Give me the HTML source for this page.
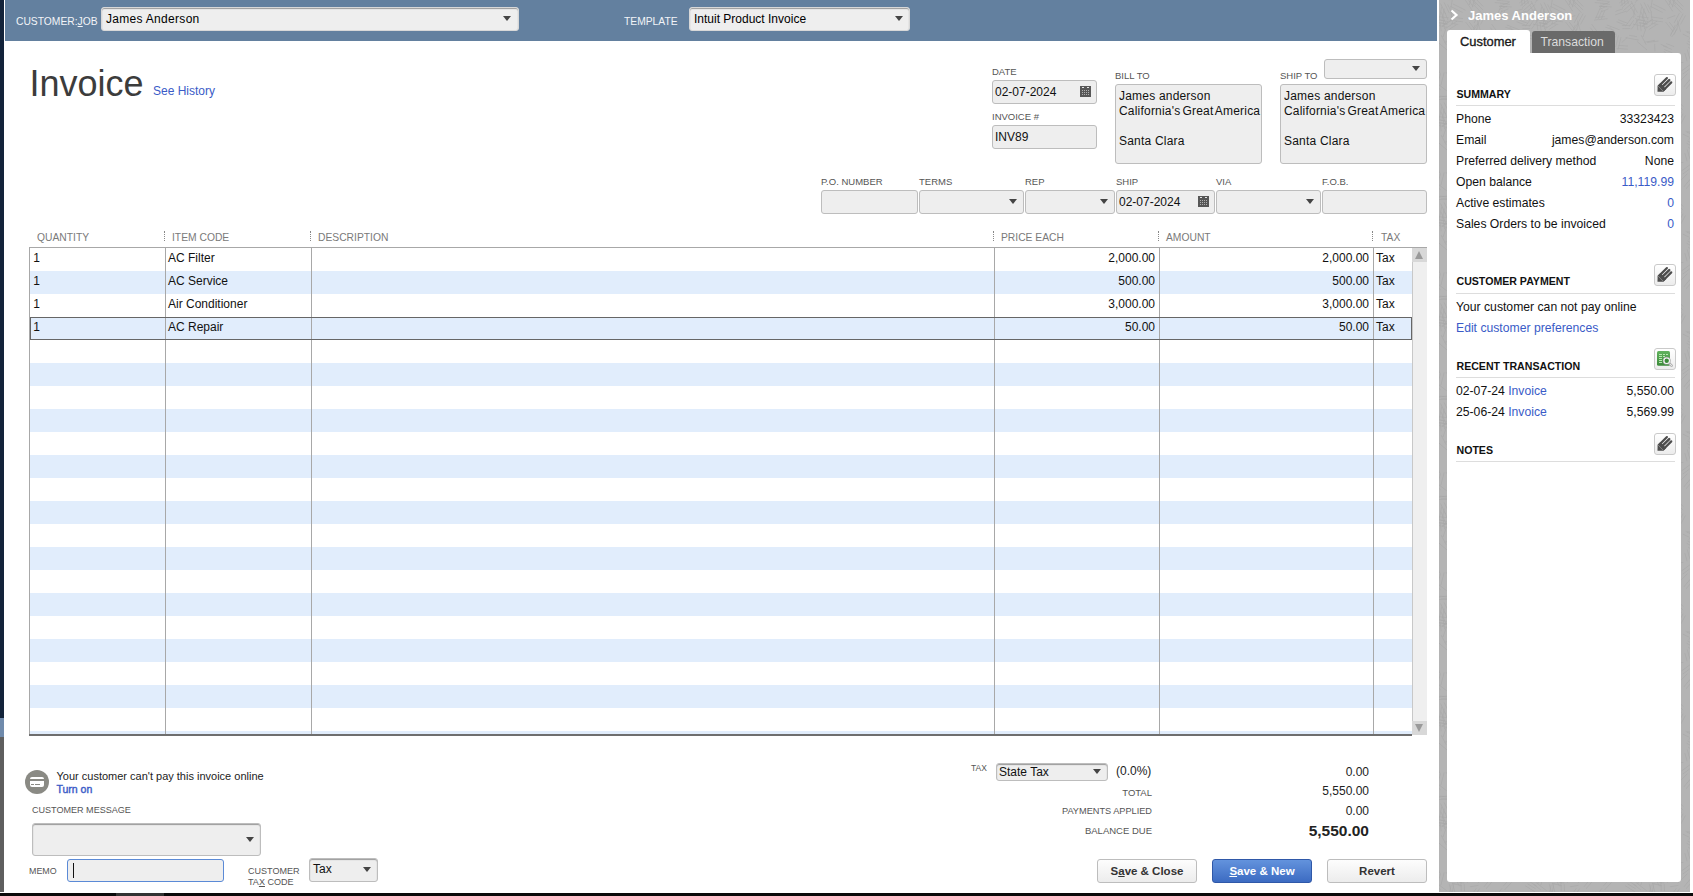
<!DOCTYPE html>
<html><head><meta charset="utf-8"><style>
html,body{margin:0;padding:0;}
body{width:1693px;height:896px;position:relative;overflow:hidden;background:#fff;font-family:"Liberation Sans",sans-serif;}
.t{position:absolute;white-space:nowrap;line-height:1;}
u{text-decoration:underline;text-underline-offset:1px;}
</style></head><body>
<div style="position:absolute;left:0px;top:0px;width:4px;height:718px;background:#13233a"></div>
<div style="position:absolute;left:0px;top:718px;width:4px;height:19px;background:#6f8aab"></div>
<div style="position:absolute;left:0px;top:737px;width:4px;height:155px;background:#5f5f5f"></div>
<div style="position:absolute;left:0px;top:893px;width:1693px;height:3px;background:#0a0a0a"></div>
<div style="position:absolute;left:116px;top:893px;width:48px;height:3px;background:#333"></div>
<div style="position:absolute;left:5px;top:0px;width:1432px;height:41px;background:#63809f"></div>
<div class="t" style="left:16px;top:16.78px;font-size:10.3px;color:#f2f4f8;font-weight:normal;">CUSTOMER:<u>J</u>OB</div>
<div style="position:absolute;left:101px;top:7px;width:418px;height:24px;box-sizing:border-box;background:#eeeeee;border:1px solid #bdbdbd;border-radius:3px;background:#eeeeee;border:1px solid #d8d8d8;box-shadow:inset 0 1px 1px #999;"></div>
<div class="t" style="left:106px;top:12.84px;font-size:12px;color:#000;font-weight:normal;letter-spacing:0.3px">James Anderson</div>
<div style="position:absolute;left:503.0px;top:16.0px;width:0;height:0;border-left:4.5px solid transparent;border-right:4.5px solid transparent;border-top:5px solid #444;"></div>
<div class="t" style="left:624px;top:17.28px;font-size:10.3px;color:#f2f4f8;font-weight:normal;">TEMPLATE</div>
<div style="position:absolute;left:689px;top:7px;width:221px;height:24px;box-sizing:border-box;background:#eeeeee;border:1px solid #bdbdbd;border-radius:3px;background:#eeeeee;border:1px solid #d8d8d8;box-shadow:inset 0 1px 1px #999;"></div>
<div class="t" style="left:694px;top:12.84px;font-size:12px;color:#000;font-weight:normal;">Intuit Product Invoice</div>
<div style="position:absolute;left:895.0px;top:16.0px;width:0;height:0;border-left:4.5px solid transparent;border-right:4.5px solid transparent;border-top:5px solid #444;"></div>
<div class="t" style="left:29.5px;top:65.63px;font-size:36px;color:#3c3c3c;font-weight:normal;">Invoice</div>
<div class="t" style="left:153px;top:85.14px;font-size:12px;color:#3a5bc7;font-weight:normal;">See History</div>
<div class="t" style="left:992px;top:66.96px;font-size:9.5px;color:#555;font-weight:normal;">DATE</div>
<div style="position:absolute;left:992px;top:80px;width:105px;height:24px;box-sizing:border-box;background:#eeeeee;border:1px solid #bdbdbd;border-radius:3px;"></div>
<div class="t" style="left:995px;top:86.34px;font-size:12px;color:#111;font-weight:normal;">02-07-2024</div>
<div class="t" style="left:992px;top:111.96px;font-size:9.5px;color:#555;font-weight:normal;">INVOICE #</div>
<div style="position:absolute;left:992px;top:125px;width:105px;height:24px;box-sizing:border-box;background:#eeeeee;border:1px solid #bdbdbd;border-radius:3px;"></div>
<div class="t" style="left:995px;top:131.34px;font-size:12px;color:#111;font-weight:normal;">INV89</div>
<svg style="position:absolute;left:1080px;top:86px" width="11" height="11" viewBox="0 0 11 11"><rect x="0" y="0" width="11" height="11" fill="#575757"/><g fill="#e6e6e6"><rect x="2" y="1" width="2" height="1"/><rect x="7" y="1" width="2" height="1"/></g><g fill="#b0b0b0"><rect x="2" y="4" width="1" height="1"/><rect x="4" y="4" width="1" height="1"/><rect x="6" y="4" width="1" height="1"/><rect x="8" y="4" width="1" height="1"/><rect x="2" y="6" width="1" height="1"/><rect x="4" y="6" width="1" height="1"/><rect x="6" y="6" width="1" height="1"/><rect x="8" y="6" width="1" height="1"/><rect x="2" y="8" width="1" height="1"/><rect x="4" y="8" width="1" height="1"/><rect x="6" y="8" width="1" height="1"/><rect x="8" y="8" width="1" height="1"/></g></svg>
<div class="t" style="left:1115px;top:70.96px;font-size:9.5px;color:#555;font-weight:normal;">BILL TO</div>
<div style="position:absolute;left:1115px;top:84px;width:147px;height:80px;box-sizing:border-box;background:#eeeeee;border:1px solid #bdbdbd;border-radius:3px;"></div>
<div class="t" style="left:1119px;top:89.84px;width:142px;overflow:hidden;font-size:12px;color:#111;letter-spacing:0.2px;">James anderson</div>
<div class="t" style="left:1119px;top:104.84px;width:142px;overflow:hidden;font-size:12px;color:#111;letter-spacing:0.2px;word-spacing:-1.5px">California's Great America</div>
<div class="t" style="left:1119px;top:134.84px;width:142px;overflow:hidden;font-size:12px;color:#111;letter-spacing:0.2px;">Santa Clara</div>
<div class="t" style="left:1280px;top:70.96px;font-size:9.5px;color:#555;font-weight:normal;">SHIP TO</div>
<div style="position:absolute;left:1324px;top:59px;width:103px;height:20px;box-sizing:border-box;background:#eeeeee;border:1px solid #bdbdbd;border-radius:3px;"></div>
<div style="position:absolute;left:1412.0px;top:66.0px;width:0;height:0;border-left:4.5px solid transparent;border-right:4.5px solid transparent;border-top:5px solid #444;"></div>
<div style="position:absolute;left:1280px;top:84px;width:147px;height:80px;box-sizing:border-box;background:#eeeeee;border:1px solid #bdbdbd;border-radius:3px;"></div>
<div class="t" style="left:1284px;top:89.84px;width:142px;overflow:hidden;font-size:12px;color:#111;letter-spacing:0.2px;">James anderson</div>
<div class="t" style="left:1284px;top:104.84px;width:142px;overflow:hidden;font-size:12px;color:#111;letter-spacing:0.2px;word-spacing:-1.5px">California's Great America</div>
<div class="t" style="left:1284px;top:134.84px;width:142px;overflow:hidden;font-size:12px;color:#111;letter-spacing:0.2px;">Santa Clara</div>
<div class="t" style="left:821px;top:176.96px;font-size:9.5px;color:#555;font-weight:normal;">P.O. NUMBER</div>
<div style="position:absolute;left:821px;top:190px;width:97px;height:24px;box-sizing:border-box;background:#eeeeee;border:1px solid #bdbdbd;border-radius:3px;"></div>
<div class="t" style="left:919px;top:176.96px;font-size:9.5px;color:#555;font-weight:normal;">TERMS</div>
<div style="position:absolute;left:919px;top:190px;width:105px;height:24px;box-sizing:border-box;background:#eeeeee;border:1px solid #bdbdbd;border-radius:3px;"></div>
<div style="position:absolute;left:1009.0px;top:199.0px;width:0;height:0;border-left:4.5px solid transparent;border-right:4.5px solid transparent;border-top:5px solid #444;"></div>
<div class="t" style="left:1025px;top:176.96px;font-size:9.5px;color:#555;font-weight:normal;">REP</div>
<div style="position:absolute;left:1025px;top:190px;width:90px;height:24px;box-sizing:border-box;background:#eeeeee;border:1px solid #bdbdbd;border-radius:3px;"></div>
<div style="position:absolute;left:1100.0px;top:199.0px;width:0;height:0;border-left:4.5px solid transparent;border-right:4.5px solid transparent;border-top:5px solid #444;"></div>
<div class="t" style="left:1116px;top:176.96px;font-size:9.5px;color:#555;font-weight:normal;">SHIP</div>
<div style="position:absolute;left:1116px;top:190px;width:99px;height:24px;box-sizing:border-box;background:#eeeeee;border:1px solid #bdbdbd;border-radius:3px;"></div>
<div class="t" style="left:1119px;top:196.34px;font-size:12px;color:#111;font-weight:normal;">02-07-2024</div>
<svg style="position:absolute;left:1198px;top:196px" width="11" height="11" viewBox="0 0 11 11"><rect x="0" y="0" width="11" height="11" fill="#575757"/><g fill="#e6e6e6"><rect x="2" y="1" width="2" height="1"/><rect x="7" y="1" width="2" height="1"/></g><g fill="#b0b0b0"><rect x="2" y="4" width="1" height="1"/><rect x="4" y="4" width="1" height="1"/><rect x="6" y="4" width="1" height="1"/><rect x="8" y="4" width="1" height="1"/><rect x="2" y="6" width="1" height="1"/><rect x="4" y="6" width="1" height="1"/><rect x="6" y="6" width="1" height="1"/><rect x="8" y="6" width="1" height="1"/><rect x="2" y="8" width="1" height="1"/><rect x="4" y="8" width="1" height="1"/><rect x="6" y="8" width="1" height="1"/><rect x="8" y="8" width="1" height="1"/></g></svg>
<div class="t" style="left:1216px;top:176.96px;font-size:9.5px;color:#555;font-weight:normal;">VIA</div>
<div style="position:absolute;left:1216px;top:190px;width:105px;height:24px;box-sizing:border-box;background:#eeeeee;border:1px solid #bdbdbd;border-radius:3px;"></div>
<div style="position:absolute;left:1306.0px;top:199.0px;width:0;height:0;border-left:4.5px solid transparent;border-right:4.5px solid transparent;border-top:5px solid #444;"></div>
<div class="t" style="left:1322px;top:176.96px;font-size:9.5px;color:#555;font-weight:normal;">F.O.B.</div>
<div style="position:absolute;left:1322px;top:190px;width:105px;height:24px;box-sizing:border-box;background:#eeeeee;border:1px solid #bdbdbd;border-radius:3px;"></div>
<div class="t" style="left:37px;top:233.28px;font-size:10.3px;color:#7a7a7a;font-weight:normal;">QUANTITY</div>
<div class="t" style="left:172px;top:233.28px;font-size:10.3px;color:#7a7a7a;font-weight:normal;">ITEM CODE</div>
<div class="t" style="left:318px;top:233.28px;font-size:10.3px;color:#7a7a7a;font-weight:normal;">DESCRIPTION</div>
<div class="t" style="left:1001px;top:233.28px;font-size:10.3px;color:#7a7a7a;font-weight:normal;">PRICE EACH</div>
<div class="t" style="left:1166px;top:233.28px;font-size:10.3px;color:#7a7a7a;font-weight:normal;">AMOUNT</div>
<div class="t" style="left:1381px;top:233.28px;font-size:10.3px;color:#7a7a7a;font-weight:normal;">TAX</div>
<div style="position:absolute;left:164px;top:231px;width:0;height:10px;border-left:1px dotted #888"></div>
<div style="position:absolute;left:310px;top:231px;width:0;height:10px;border-left:1px dotted #888"></div>
<div style="position:absolute;left:993px;top:231px;width:0;height:10px;border-left:1px dotted #888"></div>
<div style="position:absolute;left:1158px;top:231px;width:0;height:10px;border-left:1px dotted #888"></div>
<div style="position:absolute;left:1372px;top:231px;width:0;height:10px;border-left:1px dotted #888"></div>
<div style="position:absolute;left:29px;top:247px;width:1398px;height:1px;background:#a8a8a8"></div>
<div style="position:absolute;left:29px;top:247px;width:1px;height:489px;background:#a8a8a8"></div>
<div style="position:absolute;left:30px;top:271px;width:1382px;height:23px;background:#e1edfc"></div>
<div style="position:absolute;left:30px;top:317px;width:1382px;height:23px;background:#e1edfc"></div>
<div style="position:absolute;left:30px;top:363px;width:1382px;height:23px;background:#e1edfc"></div>
<div style="position:absolute;left:30px;top:409px;width:1382px;height:23px;background:#e1edfc"></div>
<div style="position:absolute;left:30px;top:455px;width:1382px;height:23px;background:#e1edfc"></div>
<div style="position:absolute;left:30px;top:501px;width:1382px;height:23px;background:#e1edfc"></div>
<div style="position:absolute;left:30px;top:547px;width:1382px;height:23px;background:#e1edfc"></div>
<div style="position:absolute;left:30px;top:593px;width:1382px;height:23px;background:#e1edfc"></div>
<div style="position:absolute;left:30px;top:639px;width:1382px;height:23px;background:#e1edfc"></div>
<div style="position:absolute;left:30px;top:685px;width:1382px;height:23px;background:#e1edfc"></div>
<div style="position:absolute;left:30px;top:731px;width:1382px;height:3px;background:#e1edfc"></div>
<div style="position:absolute;left:165px;top:248px;width:1px;height:486px;background:#a8a8a8"></div>
<div style="position:absolute;left:311px;top:248px;width:1px;height:486px;background:#a8a8a8"></div>
<div style="position:absolute;left:994px;top:248px;width:1px;height:486px;background:#a8a8a8"></div>
<div style="position:absolute;left:1159px;top:248px;width:1px;height:486px;background:#a8a8a8"></div>
<div style="position:absolute;left:1373px;top:248px;width:1px;height:486px;background:#a8a8a8"></div>
<div style="position:absolute;left:29px;top:734px;width:1383px;height:2px;background:#6e6e6e"></div>
<div style="position:absolute;left:1412px;top:248px;width:15px;height:487px;background:#efefef;border-left:1px solid #c8c8c8;box-sizing:border-box"></div>
<div style="position:absolute;left:1412px;top:248px;width:15px;height:14px;background:#d8d8d8"></div>
<div style="position:absolute;left:1412px;top:721px;width:15px;height:14px;background:#d8d8d8"></div>
<div style="position:absolute;left:1415px;top:251px;width:0;height:0;border-left:4.5px solid transparent;border-right:4.5px solid transparent;border-bottom:8px solid #9a9a9a"></div>
<div style="position:absolute;left:1415px;top:724px;width:0;height:0;border-left:4.5px solid transparent;border-right:4.5px solid transparent;border-top:8px solid #9a9a9a"></div>
<div style="position:absolute;left:30px;top:317px;width:1382px;height:23px;box-sizing:border-box;border:1px solid #666"></div>
<div class="t" style="left:33.3px;top:251.84px;font-size:12px;color:#111;font-weight:normal;">1</div>
<div class="t" style="left:168px;top:251.84px;font-size:12px;color:#111;font-weight:normal;">AC Filter</div>
<div class="t" style="right:538px;top:251.84px;font-size:12px;color:#111;font-weight:normal;">2,000.00</div>
<div class="t" style="right:324px;top:251.84px;font-size:12px;color:#111;font-weight:normal;">2,000.00</div>
<div class="t" style="left:1376px;top:251.84px;font-size:12px;color:#111;font-weight:normal;">Tax</div>
<div class="t" style="left:33.3px;top:274.84px;font-size:12px;color:#111;font-weight:normal;">1</div>
<div class="t" style="left:168px;top:274.84px;font-size:12px;color:#111;font-weight:normal;">AC Service</div>
<div class="t" style="right:538px;top:274.84px;font-size:12px;color:#111;font-weight:normal;">500.00</div>
<div class="t" style="right:324px;top:274.84px;font-size:12px;color:#111;font-weight:normal;">500.00</div>
<div class="t" style="left:1376px;top:274.84px;font-size:12px;color:#111;font-weight:normal;">Tax</div>
<div class="t" style="left:33.3px;top:297.84px;font-size:12px;color:#111;font-weight:normal;">1</div>
<div class="t" style="left:168px;top:297.84px;font-size:12px;color:#111;font-weight:normal;">Air Conditioner</div>
<div class="t" style="right:538px;top:297.84px;font-size:12px;color:#111;font-weight:normal;">3,000.00</div>
<div class="t" style="right:324px;top:297.84px;font-size:12px;color:#111;font-weight:normal;">3,000.00</div>
<div class="t" style="left:1376px;top:297.84px;font-size:12px;color:#111;font-weight:normal;">Tax</div>
<div class="t" style="left:33.3px;top:320.84px;font-size:12px;color:#111;font-weight:normal;">1</div>
<div class="t" style="left:168px;top:320.84px;font-size:12px;color:#111;font-weight:normal;">AC Repair</div>
<div class="t" style="right:538px;top:320.84px;font-size:12px;color:#111;font-weight:normal;">50.00</div>
<div class="t" style="right:324px;top:320.84px;font-size:12px;color:#111;font-weight:normal;">50.00</div>
<div class="t" style="left:1376px;top:320.84px;font-size:12px;color:#111;font-weight:normal;">Tax</div>
<div style="position:absolute;left:25px;top:770px;width:24px;height:24px;border-radius:50%;background:#8a8a84"></div>
<div style="position:absolute;left:30px;top:777px;width:14px;height:10px;background:#fff;border-radius:2px"></div>
<div style="position:absolute;left:30px;top:779px;width:14px;height:2px;background:#8a8a84"></div>
<div style="position:absolute;left:31px;top:784px;width:3px;height:1px;background:#8a8a84"></div>
<div style="position:absolute;left:35px;top:784px;width:5px;height:1px;background:#8a8a84"></div>
<div class="t" style="left:56.5px;top:770.69px;font-size:11px;color:#222;font-weight:normal;">Your customer can't pay this invoice online</div>
<div class="t" style="left:56.5px;top:784.11px;font-size:10.5px;color:#3a5bc7;font-weight:normal;-webkit-text-stroke:0.4px #3a5bc7">Turn on</div>
<div class="t" style="left:32px;top:806.14px;font-size:9.05px;color:#555;font-weight:normal;">CUSTOMER MESSAGE</div>
<div style="position:absolute;left:32px;top:823px;width:229px;height:33px;box-sizing:border-box;background:#eeeeee;border:1px solid #bdbdbd;border-radius:3px;box-shadow:inset 0 1px 1px #999;"></div>
<div style="position:absolute;left:246.0px;top:837.0px;width:0;height:0;border-left:4.5px solid transparent;border-right:4.5px solid transparent;border-top:5px solid #444;"></div>
<div class="t" style="left:29px;top:866.67px;font-size:8.9px;color:#555;font-weight:normal;">MEMO</div>
<div style="position:absolute;left:67px;top:859px;width:157px;height:23px;box-sizing:border-box;background:#eeeeee;border:1px solid #bdbdbd;border-radius:3px;border:1.5px solid #5b8ad6;"></div>
<div style="position:absolute;left:73px;top:863px;width:1px;height:15px;background:#111"></div>
<div class="t" style="left:248px;top:866.54px;font-size:9.05px;color:#555;font-weight:normal;">CUSTOMER</div>
<div class="t" style="left:248px;top:878.14px;font-size:9.05px;color:#555;font-weight:normal;">TA<u>X</u> CODE</div>
<div style="position:absolute;left:309px;top:858px;width:69px;height:24px;box-sizing:border-box;background:#eeeeee;border:1px solid #bdbdbd;border-radius:3px;box-shadow:inset 0 1px 1px #999;"></div>
<div class="t" style="left:313px;top:863.34px;font-size:12px;color:#111;font-weight:normal;">Tax</div>
<div style="position:absolute;left:363.0px;top:867.0px;width:0;height:0;border-left:4.5px solid transparent;border-right:4.5px solid transparent;border-top:5px solid #444;"></div>
<div class="t" style="left:971px;top:764.30px;font-size:8.5px;color:#555;font-weight:normal;">TAX</div>
<div style="position:absolute;left:996px;top:763px;width:112px;height:18px;box-sizing:border-box;background:#eeeeee;border:1px solid #bdbdbd;border-radius:3px;box-shadow:inset 0 1px 1px #999;"></div>
<div class="t" style="left:999px;top:766.14px;font-size:12px;color:#111;font-weight:normal;">State Tax</div>
<div style="position:absolute;left:1093.0px;top:769.0px;width:0;height:0;border-left:4.5px solid transparent;border-right:4.5px solid transparent;border-top:5px solid #444;"></div>
<div class="t" style="left:1116px;top:764.94px;font-size:12px;color:#222;font-weight:normal;">(0.0%)</div>
<div class="t" style="right:324px;top:766.14px;font-size:12px;color:#222;font-weight:normal;">0.00</div>
<div class="t" style="right:541px;top:787.96px;font-size:9.5px;color:#555;font-weight:normal;">TOTAL</div>
<div class="t" style="right:324px;top:785.14px;font-size:12px;color:#222;font-weight:normal;">5,550.00</div>
<div class="t" style="right:541px;top:806.71px;font-size:9.2px;color:#555;font-weight:normal;">PAYMENTS APPLIED</div>
<div class="t" style="right:324px;top:805.14px;font-size:12px;color:#222;font-weight:normal;">0.00</div>
<div class="t" style="right:541px;top:826.46px;font-size:9.5px;color:#555;font-weight:normal;">BALANCE DUE</div>
<div class="t" style="right:324px;top:823.38px;font-size:15.5px;color:#222;font-weight:bold;">5,550.00</div>
<div style="position:absolute;left:1097px;top:859px;width:100px;height:24px;box-sizing:border-box;border-radius:3px;background:linear-gradient(#fdfdfd,#ececec);border:1px solid #bdbdbd;color:#333;font-weight:bold;font-size:11.5px;text-align:center;line-height:22px">S<u>a</u>ve &amp; Close</div>
<div style="position:absolute;left:1212px;top:859px;width:100px;height:24px;box-sizing:border-box;border-radius:3px;background:linear-gradient(#6393dd,#3c6bc2);border:1px solid #2f58a8;color:#fff;font-weight:bold;font-size:11.5px;text-align:center;line-height:22px"><u>S</u>ave &amp; New</div>
<div style="position:absolute;left:1327px;top:859px;width:100px;height:24px;box-sizing:border-box;border-radius:3px;background:linear-gradient(#fdfdfd,#ececec);border:1px solid #bdbdbd;color:#333;font-weight:bold;font-size:11.5px;text-align:center;line-height:22px">Revert</div>
<div style="position:absolute;left:1439px;top:0px;width:251px;height:892px;background:#b4b4b4"></div>
<svg style="position:absolute;left:1439px;top:0" width="251" height="892"><defs><pattern id="tx" width="100" height="100" patternUnits="userSpaceOnUse"><path d="M66.5 70.7L56.2 78.5M5.4 11.4L9.1 20.3M2.0 11.8L6.7 23.0M88.5 37.2L82.7 42.6M-3.1 82.4L7.7 90.8M96.9 82.4L107.7 90.8M-5.4 84.4L1.9 90.0M94.6 84.4L101.9 90.0M68.7 18.7L55.0 20.1M65.8 16.6L56.3 17.5M7.6 26.4L4.0 37.0M38.6 28.6L32.6 37.1M39.2 23.5L31.2 34.8M88.9 -0.1L81.3 5.9M88.9 99.9L81.3 105.9M89.6 -4.3L80.2 3.1M89.6 95.7L80.2 103.1M17.6 24.7L9.7 29.7M18.2 21.0L7.7 27.7M13.9 19.5L3.3 26.2M92.0 1.0L98.4 12.7M92.0 101.0L98.4 112.7M91.2 5.7L96.3 15.2M13.9 3.9L26.4 10.2M11.2 6.2L23.6 12.5M32.0 58.2L22.1 64.2M27.9 56.6L18.1 62.5M25.8 54.2L18.6 58.6M13.3 83.0L16.0 92.7M10.1 83.7L12.5 92.5M87.6 -7.8L89.3 3.9M87.6 92.2L89.3 103.9M84.4 -5.9L85.9 4.3M84.4 94.1L85.9 104.3M81.5 -7.0L83.3 5.6M81.5 93.0L83.3 105.6M90.2 81.3L97.7 86.0M88.6 83.8L96.7 88.9M86.2 85.7L96.2 92.0M35.0 64.7L40.6 71.5M32.9 66.1L41.6 76.6M29.2 66.5L37.5 76.5M30.2 22.0L36.0 29.5M26.7 22.1L34.6 32.2M91.1 70.0L80.5 70.8M93.2 66.5L80.4 67.5M73.8 68.4L66.3 76.9M72.8 65.8L63.8 76.0M91.4 28.6L83.3 28.7M91.5 25.4L82.9 25.5M-2.0 41.4L8.0 50.0M98.0 41.4L108.0 50.0M48.3 49.5L50.8 58.8M45.9 53.1L48.2 61.4M38.3 20.4L41.6 31.8M52.6 24.1L60.8 35.1M51.3 27.6L56.1 34.0M48.6 41.0L58.3 46.1M47.5 43.2L57.5 48.6M49.2 47.3L55.4 50.6M65.9 10.5L61.9 19.7M63.2 9.7L59.1 19.2M61.7 6.7L56.6 18.6M70.6 27.1L77.1 33.7M27.2 43.5L35.3 46.7M23.9 45.8L32.9 49.4M25.2 49.5L33.3 52.8M52.9 81.9L47.1 88.8M52.1 78.2L44.7 87.0M10.7 72.2L17.3 81.4M7.0 72.2L12.5 79.8M14.0 -4.3L11.8 8.7M14.0 95.7L11.8 108.7M82.0 37.2L78.9 49.8M79.4 35.5L76.7 46.9M75.7 37.8L73.3 47.8M5.2 72.4L1.8 85.3M1.5 73.3L-1.2 83.8M101.5 73.3L98.8 83.8M98.7 72.0L96.6 79.8M12.7 19.7L2.9 26.0M0.7 -3.5L-3.9 2.8M0.7 96.5L-3.9 102.8M100.7 -3.5L96.1 2.8M100.7 96.5L96.1 102.8M87.4 11.1L76.1 14.9M84.2 8.7L76.3 11.4M22.7 52.9L18.4 60.8M35.3 62.3L44.5 62.6M90.1 35.3L98.0 36.7M-13.5 37.7L-0.3 40.0M86.5 37.7L99.7 40.0M24.6 50.9L32.1 58.5M22.7 53.8L29.4 60.7M67.4 64.1L74.7 66.1M25.1 83.6L25.6 91.3M21.7 81.2L22.3 90.9M48.6 73.6L38.9 83.3M12.7 57.2L16.6 65.3M9.5 56.7L15.1 67.9M39.4 25.0L35.1 34.8M36.3 24.9L31.4 36.1M-1.8 16.5L9.8 17.9M98.2 16.5L109.8 17.9M-2.9 19.8L6.1 20.9M97.1 19.8L106.1 20.9M-0.4 22.8L8.8 23.9M99.6 22.8L108.8 23.9M69.5 8.8L62.1 12.0M68.2 6.1L60.7 9.3M70.6 2.0L61.1 6.1M41.1 -7.7L35.4 0.8M41.1 92.3L35.4 100.8M40.7 88.5L34.2 98.2M37.3 88.2L30.6 98.3M-4.0 18.5L9.0 21.7M96.0 18.5L109.0 21.7M0.2 22.4L8.2 24.4M100.2 22.4L108.2 24.4M-6.1 24.0L7.5 27.4M93.9 24.0L107.5 27.4M12.2 16.9L24.1 18.6M13.8 20.5L23.9 21.9M12.2 23.4L19.4 24.4M63.0 88.4L54.6 98.7M56.7 91.7L52.1 97.4M37.2 -0.7L44.3 6.6M37.2 99.3L44.3 106.6M34.6 0.4L44.1 10.2M34.6 100.4L44.1 110.2M34.5 4.6L42.5 12.8M-11.3 76.7L-0.5 79.7M88.7 76.7L99.5 79.7M88.9 79.6L95.8 81.5M59.8 31.7L54.6 44.1M79.1 19.7L88.8 23.4M77.5 21.7L86.7 25.2M50.8 68.9L43.6 74.2M52.2 63.9L42.6 70.9M96.3 4.3L87.1 12.4M93.0 3.0L84.3 10.7M90.6 1.0L83.1 7.7M90.6 101.0L83.1 107.7M98.9 70.2L94.3 76.5M96.3 69.4L90.8 76.9M47.7 31.7L54.9 32.5M39.4 85.4L30.9 86.8M36.4 -4.2L33.2 7.4M36.4 95.8L33.2 107.4M32.4 -2.9L30.3 5.0M32.4 97.1L30.3 105.0M89.4 75.9L98.8 79.6M89.0 78.8L96.6 81.8M15.7 43.8L15.9 51.5M0.6 96.1L10.9 97.2M100.6 96.1L110.9 97.2M2.1 -1.2L10.5 -0.3M2.1 98.8L10.5 99.7M61.4 32.3L54.6 39.1M57.8 31.5L49.6 39.7M46.7 31.5L56.1 36.1M43.8 34.1L50.7 37.4M18.3 71.6L25.2 82.7M17.7 75.4L22.8 83.6M14.9 76.8L20.7 86.3M30.8 -3.9L36.7 4.8M30.8 96.1L36.7 104.8M28.5 -1.6L34.2 6.8M28.5 98.4L34.2 106.8M26.4 0.2L33.9 11.5M26.4 100.2L33.9 111.5M19.6 41.0L8.0 42.5M8.6 4.3L12.6 12.5M5.0 2.3L10.3 13.1M1.5 3.5L6.6 14.0M72.6 82.4L65.5 90.0M70.5 79.4L64.1 86.3M-4.1 60.8L0.9 73.2M95.9 60.8L100.9 73.2M93.8 63.9L96.7 71.1M77.3 36.6L68.8 39.7M72.8 34.9L65.8 37.6M46.4 15.5L41.7 24.3M44.2 13.5L37.9 25.3M40.4 13.1L35.1 23.0M5.3 8.5L3.4 18.4M2.6 6.8L0.2 19.1M102.6 6.8L100.2 19.1M95.3 8.6L94.7 17.8M-0.4 19.1L-7.9 29.6M99.6 19.1L92.1 29.6M94.7 20.2L90.2 26.6M93.6 16.3L86.5 26.3M29.2 75.2L37.2 80.4M36.3 15.5L28.1 18.5M8.4 -1.4L-3.3 0.0M8.4 98.6L-3.3 100.0M108.4 -1.4L96.7 0.0M108.4 98.6L96.7 100.0M8.2 96.0L-5.3 97.6M108.2 96.0L94.7 97.6M67.7 24.9L80.8 29.9M66.3 27.1L75.1 30.4M67.1 31.1L77.9 35.2M16.0 40.3L5.5 42.2M17.7 63.7L31.1 66.8M18.0 67.1L26.0 69.0M21.7 44.3L28.2 47.0M3.8 16.3L5.6 29.3M1.1 22.9L2.2 31.2M97.6 19.9L98.9 30.4M79.4 45.4L89.1 46.1M77.6 48.4L88.8 49.2M57.7 0.4L70.4 1.4M57.7 100.4L70.4 101.4M55.7 2.6L69.0 3.6M60.1 6.2L68.2 6.8M16.2 81.1L24.5 83.1M13.1 83.3L23.1 85.8M12.0 11.4L13.5 23.1M20.8 63.0L11.2 72.8M19.0 60.2L12.9 66.4M15.3 60.5L10.3 65.7M25.7 69.3L28.9 76.8M23.9 71.8L28.5 82.8M64.4 30.0L68.7 39.9M62.6 32.9L68.1 45.5M60.7 36.4L63.5 42.9M61.2 3.8L71.1 4.3M60.2 6.4L72.7 7.0M2.1 35.1L7.2 44.8M15.1 83.3L12.6 95.0M12.2 84.8L9.3 98.4" stroke="#a6a6a6" stroke-width="1" stroke-opacity="0.6" fill="none"/></pattern></defs><rect width="251" height="892" fill="url(#tx)"/></svg>
<svg style="position:absolute;left:1450px;top:9px" width="9" height="12" viewBox="0 0 9 12"><path d="M1.5 1.5 L6.5 6 L1.5 10.5" stroke="#fff" stroke-width="2.2" fill="none"/></svg>
<div class="t" style="left:1468px;top:9.20px;font-size:13px;color:#fff;font-weight:bold;">James Anderson</div>
<div style="position:absolute;left:1447px;top:30px;width:83px;height:24px;background:#fff;border-radius:3px 3px 0 0"></div>
<div class="t" style="left:1460px;top:35.88px;font-size:12.9px;color:#1a1a1a;font-weight:normal;-webkit-text-stroke:0.35px #1a1a1a">Customer</div>
<div style="position:absolute;left:1532px;top:31px;width:83px;height:22px;background:#6a6a6a;border-radius:3px 3px 0 0"></div>
<div class="t" style="left:1540.5px;top:35.67px;font-size:12.2px;color:#dcdcdc;font-weight:normal;">Transaction</div>
<div style="position:absolute;left:1447px;top:53px;width:234px;height:829px;background:#fff;border-radius:0 3px 3px 3px"></div>
<div style="position:absolute;left:1654px;top:74px;width:22px;height:22px;box-sizing:border-box;border:1px solid #cacaca;border-radius:3px;background:linear-gradient(#ffffff,#ececec)"></div>
<svg style="position:absolute;left:1650px;top:70px" width="30" height="30" viewBox="0 0 30 30"><g transform="translate(7.5,21.8) rotate(-45)" fill="#4d4d4d"><path d="M0 0 L4.3 -4.15 L4.3 4.15 Z"/><rect x="4.2" y="-4.15" width="4" height="8.3"/><rect x="4.2" y="-4.15" width="13.3" height="2.2" rx="1.1"/><rect x="4.2" y="-1.25" width="13.6" height="2.5" rx="1.2"/><rect x="4.2" y="1.95" width="13.3" height="2.2" rx="1.1"/><path d="M4.5 -4 L4.5 4" stroke="#909090" stroke-width="0.7"/></g></svg>
<div class="t" style="left:1456.5px;top:88.73px;font-size:10.6px;color:#111;font-weight:bold;">SUMMARY</div>
<div style="position:absolute;left:1456px;top:105px;width:219px;height:1px;background:#dddddd"></div>
<div class="t" style="left:1456px;top:113.17px;font-size:12.2px;color:#111;font-weight:normal;">Phone</div>
<div class="t" style="right:19px;top:113.17px;font-size:12.2px;color:#111;font-weight:normal;">33323423</div>
<div class="t" style="left:1456px;top:134.17px;font-size:12.2px;color:#111;font-weight:normal;">Email</div>
<div class="t" style="right:19px;top:134.17px;font-size:12.2px;color:#111;font-weight:normal;">james@anderson.com</div>
<div class="t" style="left:1456px;top:155.17px;font-size:12.2px;color:#111;font-weight:normal;">Preferred delivery method</div>
<div class="t" style="right:19px;top:155.17px;font-size:12.2px;color:#111;font-weight:normal;">None</div>
<div class="t" style="left:1456px;top:176.17px;font-size:12.2px;color:#111;font-weight:normal;">Open balance</div>
<div class="t" style="right:19px;top:176.17px;font-size:12.2px;color:#3a5bc7;font-weight:normal;">11,119.99</div>
<div class="t" style="left:1456px;top:197.17px;font-size:12.2px;color:#111;font-weight:normal;">Active estimates</div>
<div class="t" style="right:19px;top:197.17px;font-size:12.2px;color:#3a5bc7;font-weight:normal;">0</div>
<div class="t" style="left:1456px;top:218.17px;font-size:12.2px;color:#111;font-weight:normal;">Sales Orders to be invoiced</div>
<div class="t" style="right:19px;top:218.17px;font-size:12.2px;color:#3a5bc7;font-weight:normal;">0</div>
<div style="position:absolute;left:1654px;top:264px;width:22px;height:22px;box-sizing:border-box;border:1px solid #cacaca;border-radius:3px;background:linear-gradient(#ffffff,#ececec)"></div>
<svg style="position:absolute;left:1650px;top:260px" width="30" height="30" viewBox="0 0 30 30"><g transform="translate(7.5,21.8) rotate(-45)" fill="#4d4d4d"><path d="M0 0 L4.3 -4.15 L4.3 4.15 Z"/><rect x="4.2" y="-4.15" width="4" height="8.3"/><rect x="4.2" y="-4.15" width="13.3" height="2.2" rx="1.1"/><rect x="4.2" y="-1.25" width="13.6" height="2.5" rx="1.2"/><rect x="4.2" y="1.95" width="13.3" height="2.2" rx="1.1"/><path d="M4.5 -4 L4.5 4" stroke="#909090" stroke-width="0.7"/></g></svg>
<div class="t" style="left:1456.5px;top:275.53px;font-size:10.6px;color:#111;font-weight:bold;">CUSTOMER PAYMENT</div>
<div style="position:absolute;left:1456px;top:293px;width:219px;height:1px;background:#dddddd"></div>
<div class="t" style="left:1456px;top:300.97px;font-size:12.2px;color:#111;font-weight:normal;">Your customer can not pay online</div>
<div class="t" style="left:1456px;top:322.47px;font-size:12.2px;color:#3a5bc7;font-weight:normal;">Edit customer preferences</div>
<div style="position:absolute;left:1654px;top:348px;width:22px;height:22px;box-sizing:border-box;border:1px solid #cacaca;border-radius:3px;background:linear-gradient(#ffffff,#ececec)"></div>
<svg style="position:absolute;left:1650px;top:344px" width="30" height="30" viewBox="0 0 30 30"><defs><linearGradient id="gg" x1="0" y1="0" x2="0" y2="1"><stop offset="0" stop-color="#62b35e"/><stop offset="1" stop-color="#3b8a3a"/></linearGradient></defs><rect x="7" y="6.9" width="13" height="14.9" rx="1.5" fill="url(#gg)"/><g fill="#b8e8b0"><rect x="9" y="10" width="3" height="1"/><rect x="13" y="10" width="2" height="1"/><rect x="16" y="10" width="2" height="1"/><rect x="9" y="12" width="3" height="1"/><rect x="13" y="12" width="2" height="1"/><rect x="9" y="14" width="3" height="1"/><rect x="9" y="16" width="3" height="1"/><rect x="9" y="18" width="3" height="1"/></g><path d="M18.8 18.8 L21.6 21.6" stroke="#9a9a9a" stroke-width="2.4" stroke-linecap="round"/><path d="M18.8 18.8 L21.6 21.6" stroke="#e8e8e8" stroke-width="1.2" stroke-linecap="round"/><circle cx="16.7" cy="16.7" r="3.9" fill="#9c9c9c"/><circle cx="16.7" cy="16.7" r="3.3" fill="#fafafa"/><circle cx="16.7" cy="16.7" r="2.2" fill="#3a8a38"/></svg>
<div class="t" style="left:1456.5px;top:360.53px;font-size:10.6px;color:#111;font-weight:bold;">RECENT TRANSACTION</div>
<div style="position:absolute;left:1456px;top:377px;width:219px;height:1px;background:#dddddd"></div>
<div class="t" style="left:1456px;top:385.47px;font-size:12.2px;color:#111">02-07-24 <span style="color:#3a5bc7">Invoice</span></div>
<div class="t" style="right:19px;top:385.47px;font-size:12.2px;color:#111;font-weight:normal;">5,550.00</div>
<div class="t" style="left:1456px;top:406.47px;font-size:12.2px;color:#111">25-06-24 <span style="color:#3a5bc7">Invoice</span></div>
<div class="t" style="right:19px;top:406.47px;font-size:12.2px;color:#111;font-weight:normal;">5,569.99</div>
<div style="position:absolute;left:1654px;top:433px;width:22px;height:22px;box-sizing:border-box;border:1px solid #cacaca;border-radius:3px;background:linear-gradient(#ffffff,#ececec)"></div>
<svg style="position:absolute;left:1650px;top:429px" width="30" height="30" viewBox="0 0 30 30"><g transform="translate(7.5,21.8) rotate(-45)" fill="#4d4d4d"><path d="M0 0 L4.3 -4.15 L4.3 4.15 Z"/><rect x="4.2" y="-4.15" width="4" height="8.3"/><rect x="4.2" y="-4.15" width="13.3" height="2.2" rx="1.1"/><rect x="4.2" y="-1.25" width="13.6" height="2.5" rx="1.2"/><rect x="4.2" y="1.95" width="13.3" height="2.2" rx="1.1"/><path d="M4.5 -4 L4.5 4" stroke="#909090" stroke-width="0.7"/></g></svg>
<div class="t" style="left:1456.5px;top:444.73px;font-size:10.6px;color:#111;font-weight:bold;">NOTES</div>
<div style="position:absolute;left:1456px;top:461px;width:219px;height:1px;background:#dddddd"></div>
</body></html>
